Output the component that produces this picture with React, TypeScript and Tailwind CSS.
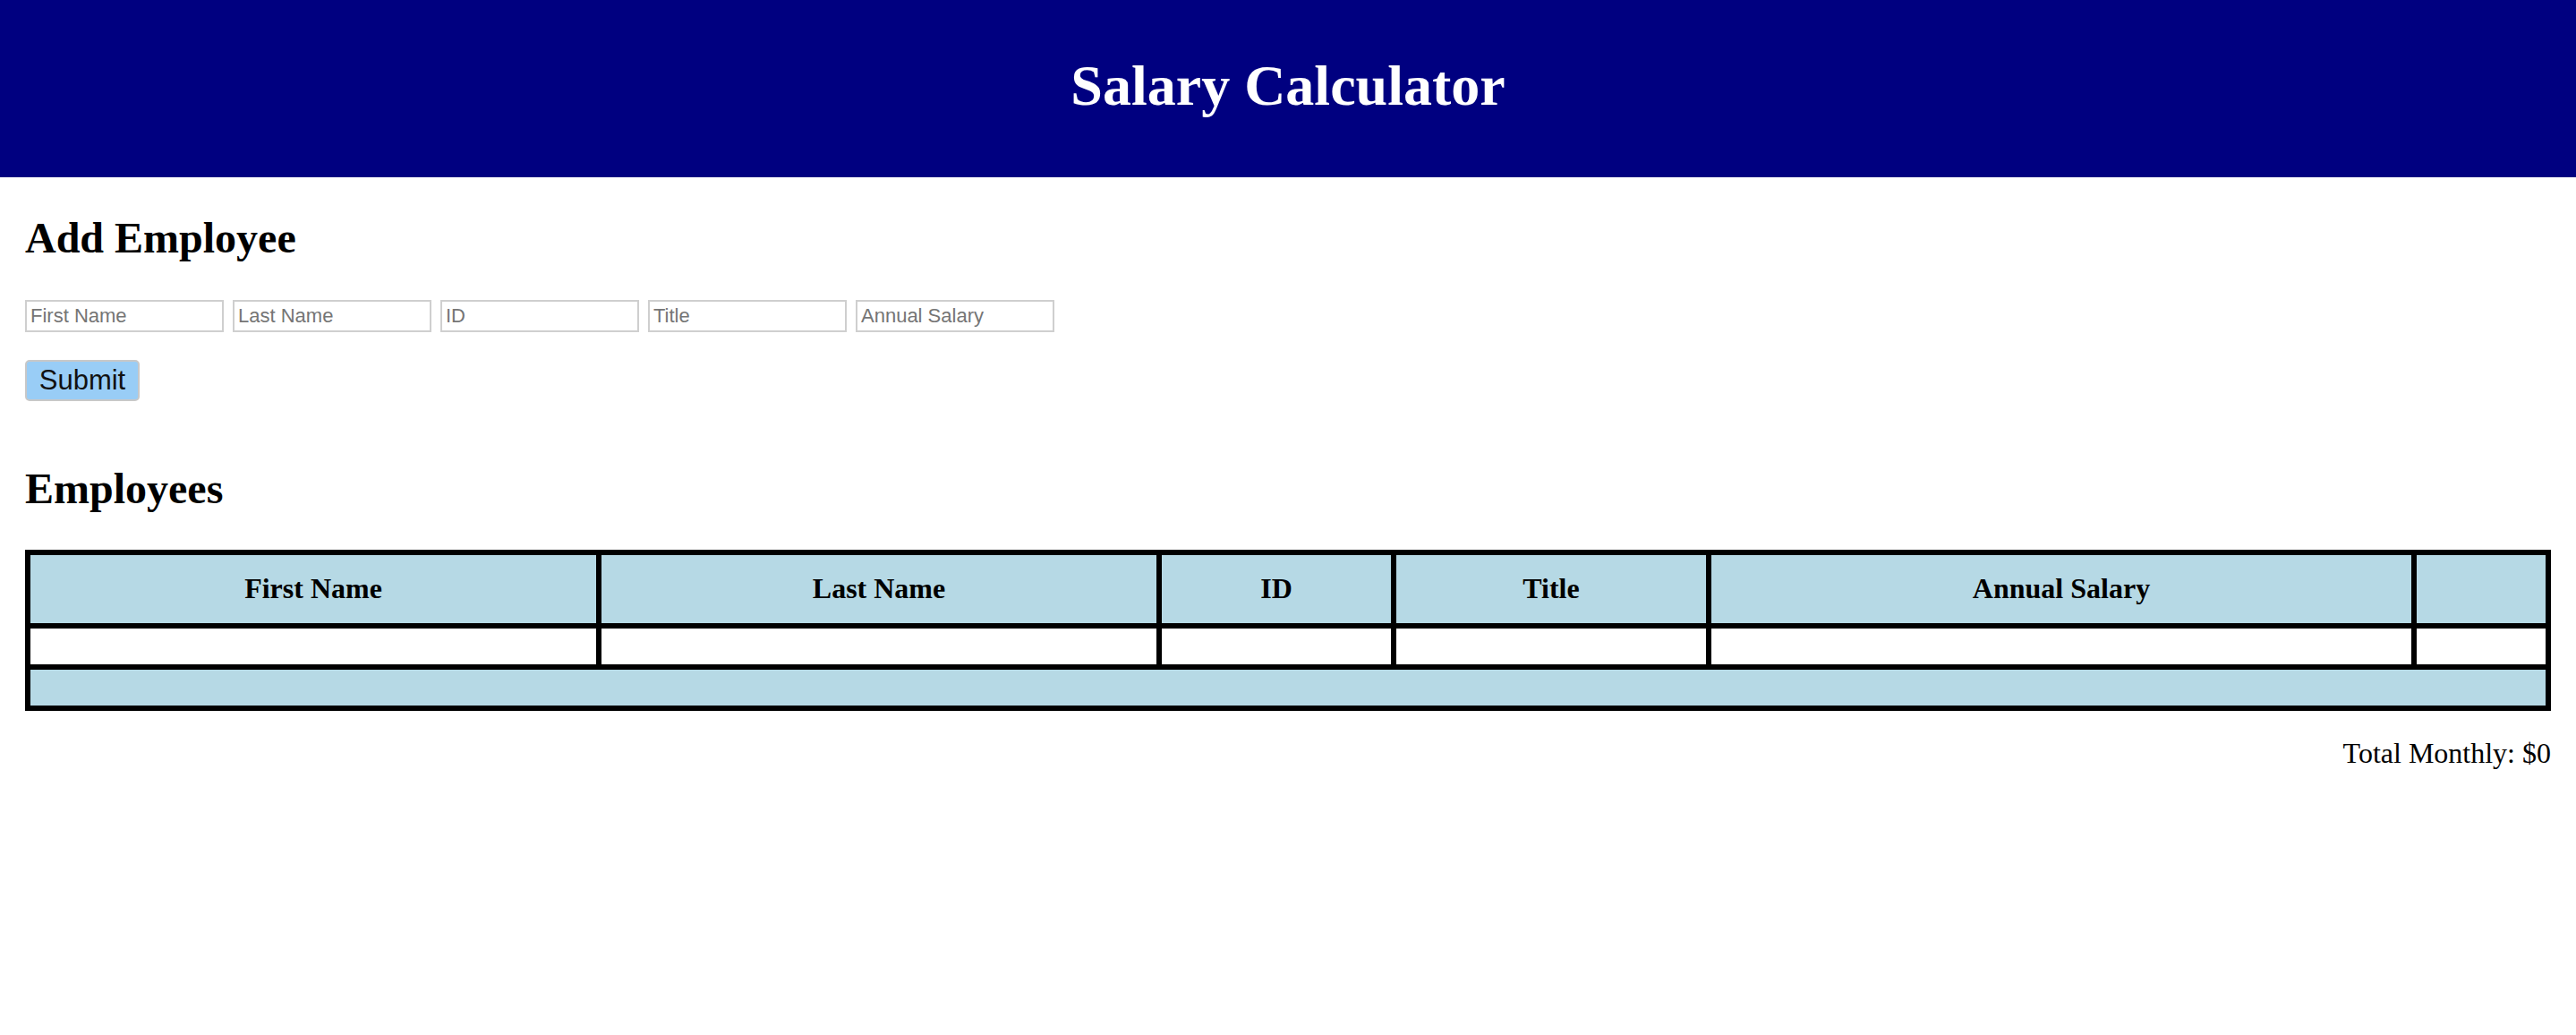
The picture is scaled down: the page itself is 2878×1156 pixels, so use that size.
import { useState } from 'react';

interface Employee {
  firstName: string;
  lastName: string;
  id: string;
  title: string;
  annualSalary: number;
}

const fields = [
  { key: 'firstName', placeholder: 'First Name' },
  { key: 'lastName', placeholder: 'Last Name' },
  { key: 'id', placeholder: 'ID' },
  { key: 'title', placeholder: 'Title' },
  { key: 'annualSalary', placeholder: 'Annual Salary' },
] as const;

const columns = ['First Name', 'Last Name', 'ID', 'Title', 'Annual Salary', ''];

export default function App() {
  const [employees, setEmployees] = useState<Employee[]>([]);
  const [form, setForm] = useState<Record<string, string>>({});

  const totalMonthly = employees.reduce((sum, e) => sum + e.annualSalary, 0) / 12;

  function handleSubmit(e: React.FormEvent) {
    e.preventDefault();
    const salary = parseFloat(form.annualSalary ?? '');
    if (!form.firstName || isNaN(salary)) return;
    setEmployees([
      ...employees,
      {
        firstName: form.firstName,
        lastName: form.lastName ?? '',
        id: form.id ?? '',
        title: form.title ?? '',
        annualSalary: salary,
      },
    ]);
    setForm({});
  }

  return (
    <div className="min-h-screen bg-white font-['Liberation_Serif','Times_New_Roman',serif] text-black">
      <header className="bg-[#000080] pt-[60px] pb-[67px]">
        <h1 className="text-center text-[64px] leading-[71px] font-bold text-white">Salary Calculator</h1>
      </header>

      <main className="px-[28px]">
        <h2 className="mt-[41px] text-[48px] leading-[53px] font-bold">Add Employee</h2>

        <form onSubmit={handleSubmit}>
          <div className="mt-[43px] flex gap-[10px]">
            {fields.map((f) => (
              <input
                key={f.key}
                type="text"
                value={form[f.key] ?? ''}
                onChange={(e) => setForm({ ...form, [f.key]: e.target.value })}
                placeholder={f.placeholder}
                className="h-[36px] w-[222px] border-2 border-[#cfcfcf] bg-white pl-[4px] font-['Liberation_Sans',Arial,sans-serif] text-[22px] text-black placeholder-[#757575] outline-none"
              />
            ))}
          </div>
          <button
            type="submit"
            className="mt-[31px] block h-[46px] w-[128px] rounded-[5px] border-2 border-[#c8c8c8] bg-[#99cdf6] font-['Liberation_Sans',Arial,sans-serif] text-[31px] leading-[40px] text-[#111]"
          >
            Submit
          </button>
        </form>

        <h2 className="mt-[71px] text-[48px] leading-[53px] font-bold">Employees</h2>

        <table className="mt-[42px] w-full table-fixed border-separate border-spacing-[6px] bg-black">
          <colgroup>
            <col className="w-[632px]" />
            <col className="w-[620px]" />
            <col className="w-[256px]" />
            <col className="w-[346px]" />
            <col className="w-[782px]" />
            <col className="w-[144px]" />
          </colgroup>
          <thead>
            <tr>
              {columns.map((c, i) => (
                <th key={i} className="bg-[#b6d9e5] pt-[19px] pb-[21px] text-center text-[32px] leading-[36px] font-bold">
                  {c}
                </th>
              ))}
            </tr>
          </thead>
          <tbody>
            {employees.length === 0 ? (
              <tr>
                {columns.map((_, i) => (
                  <td key={i} className="h-[40px] bg-white" />
                ))}
              </tr>
            ) : (
              employees.map((emp, i) => (
                <tr key={i}>
                  <td className="h-[40px] bg-white text-[32px]">{emp.firstName}</td>
                  <td className="h-[40px] bg-white text-[32px]">{emp.lastName}</td>
                  <td className="h-[40px] bg-white text-[32px]">{emp.id}</td>
                  <td className="h-[40px] bg-white text-[32px]">{emp.title}</td>
                  <td className="h-[40px] bg-white text-[32px]">{emp.annualSalary}</td>
                  <td className="h-[40px] bg-white" />
                </tr>
              ))
            )}
          </tbody>
          <tfoot>
            <tr>
              <td colSpan={6} className="h-[40px] bg-[#b6d9e5]" />
            </tr>
          </tfoot>
        </table>

        <p className="mt-[30px] text-right text-[32px] leading-[35px]">
          Total Monthly: ${Math.round(totalMonthly)}
        </p>
      </main>
    </div>
  );
}
